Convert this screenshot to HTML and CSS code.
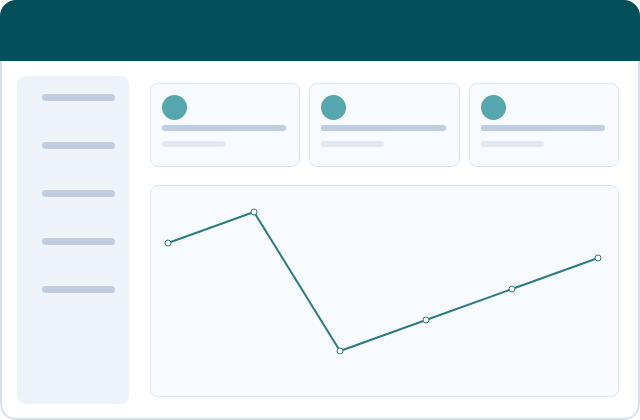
FILE: index.html
```html
<!DOCTYPE html>
<html>
<head>
  <meta charset="UTF-8">
  <title>Dashboard</title>
  <link rel="stylesheet" href="styles.css">
</head>
<body>
  <div class="frame">
    <div class="topbar"></div>
    <div class="content">
      <div class="sidebar">
        <div class="nav-line"></div>
        <div class="nav-line"></div>
        <div class="nav-line"></div>
        <div class="nav-line"></div>
        <div class="nav-line"></div>
      </div>
      <div class="main">
        <div class="stats">
          <div class="stat-card">
            <div class="dot"></div>
            <div class="line-long"></div>
            <div class="line-short"></div>
          </div>
          <div class="stat-card">
            <div class="dot"></div>
            <div class="line-long"></div>
            <div class="line-short"></div>
          </div>
          <div class="stat-card">
            <div class="dot"></div>
            <div class="line-long"></div>
            <div class="line-short"></div>
          </div>
        </div>
        <div class="chart-card">
          <svg class="chart" viewBox="0 0 469 212" width="469" height="212">
            <polyline points="18,58 104,27 190,166 276,135 362,104 448,73" fill="none" stroke="#2a7b82" stroke-width="2" stroke-linejoin="round"/>
            <g fill="#fff" stroke="#2a7b82" stroke-width="1">
              <circle cx="18" cy="58" r="3"/>
              <circle cx="104" cy="27" r="3"/>
              <circle cx="190" cy="166" r="3"/>
              <circle cx="276" cy="135" r="3"/>
              <circle cx="362" cy="104" r="3"/>
              <circle cx="448" cy="73" r="3"/>
            </g>
          </svg>
        </div>
      </div>
    </div>
  </div>
</body>
</html>
```

FILE: styles.css
```css
body {
  margin: 0;
  font-family: "Liberation Sans", Arial, sans-serif;
  background-color: #ffffff;
}
.frame {
  width: 640px;
  height: 420px;
  border-radius: 16px;
  overflow: hidden;
  display: flex;
  flex-direction: column;
}
.topbar {
  height: 61px;
  background-color: #034f5a;
  flex-shrink: 0;
}
.content {
  flex: 1;
  display: flex;
  gap: 21px;
  padding: 15px 15px 14px 15px;
  background-color: #ffffff;
  border: 2px solid #d6e0ed;
  border-top: none;
  border-radius: 0 0 16px 16px;
}
.sidebar {
  width: 112px;
  flex-shrink: 0;
  background-color: #eef3fa;
  border-radius: 8px;
  display: flex;
  flex-direction: column;
  gap: 41px;
  padding: 18px 0 0 25px;
  box-sizing: border-box;
}
.nav-line {
  width: 73px;
  height: 7px;
  border-radius: 4px;
  background-color: #bfcde3;
}
.main {
  flex: 1;
  display: flex;
  flex-direction: column;
  gap: 18px;
  padding: 7px 4px 7px 0;
}
.stats {
  display: flex;
  gap: 9px;
  height: 84px;
}
.stat-card {
  flex: 1;
  background-color: #f7faff;
  border: 1px solid #dbe5f3;
  border-radius: 8px;
  padding: 11px;
}
.dot {
  width: 25px;
  height: 25px;
  border-radius: 50%;
  background-color: #55a6ae;
}
.line-long {
  height: 6px;
  margin-top: 5px;
  width: calc(100% - 2px);
  border-radius: 3px;
  background-color: #bfcde3;
}
.line-short {
  height: 6px;
  margin-top: 10px;
  width: 63px;
  border-radius: 3px;
  background-color: #e1e8f2;
}
.chart-card {
  flex: 1;
  background-color: #f7faff;
  border: 1px solid #dbe5f3;
  border-radius: 8px;
  overflow: hidden;
}
.chart {
  display: block;
  margin: -1px;
}
```
